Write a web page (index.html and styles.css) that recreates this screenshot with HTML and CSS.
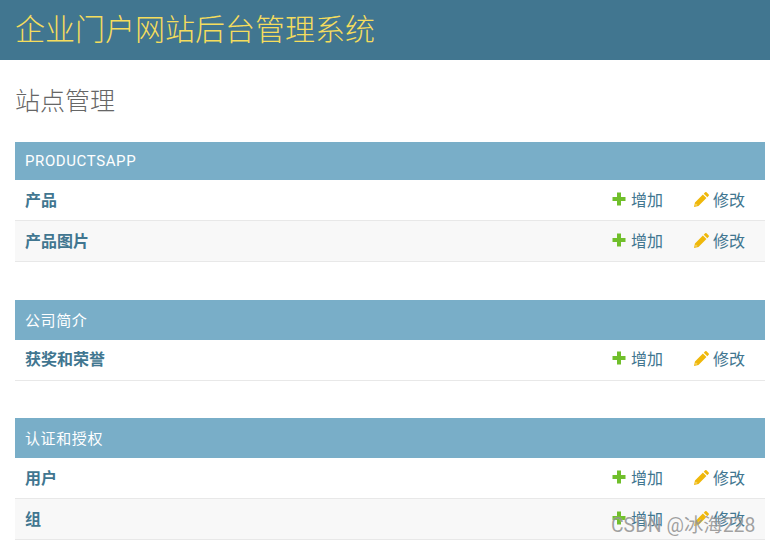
FILE: index.html
```html
<!DOCTYPE html>
<html lang="zh-CN">
<head>
<meta charset="utf-8">
<title>站点管理</title>
<link rel="stylesheet" href="styles.css">
</head>
<body>
<svg class="defs" width="0" height="0" aria-hidden="true">
  <symbol id="i-add" viewBox="0 0 14 14"><path d="M5 .5h4V5h4.5v4H9v4.5H5V9H.5V5H5z"/></symbol>
  <symbol id="i-edit" viewBox="0 0 14 14"><path fill-rule="evenodd" d="M10.4.3a1 1 0 0 1 1.3 0l2 2a1 1 0 0 1 0 1.3l-1.3 1.3-3.3-3.3zM8.3 2.4l3.3 3.3-7.4 7.4L0 14l.9-4.2zM1.9 10.6l-.6 2.1 2.1-.6-.6-.1-.8-.1z"/></symbol>
</svg>
<header class="site-header"><span class="brand">企业门户网站后台管理系统</span></header>
<main class="content">
  <h1 class="page-title">站点管理</h1>

  <section class="module">
    <h2 class="caption caption-latin">PRODUCTSAPP</h2>
    <div class="row">
      <a class="model">产品</a>
      <a class="action action-add"><svg class="icon add"><use href="#i-add"/></svg>增加</a>
      <a class="action"><svg class="icon edit"><use href="#i-edit"/></svg>修改</a>
    </div>
    <div class="row alt">
      <a class="model">产品图片</a>
      <a class="action action-add"><svg class="icon add"><use href="#i-add"/></svg>增加</a>
      <a class="action"><svg class="icon edit"><use href="#i-edit"/></svg>修改</a>
    </div>
  </section>

  <section class="module module-short">
    <h2 class="caption">公司简介</h2>
    <div class="row">
      <a class="model">获奖和荣誉</a>
      <a class="action action-add"><svg class="icon add"><use href="#i-add"/></svg>增加</a>
      <a class="action"><svg class="icon edit"><use href="#i-edit"/></svg>修改</a>
    </div>
  </section>

  <section class="module">
    <h2 class="caption">认证和授权</h2>
    <div class="row">
      <a class="model">用户</a>
      <a class="action action-add"><svg class="icon add"><use href="#i-add"/></svg>增加</a>
      <a class="action"><svg class="icon edit"><use href="#i-edit"/></svg>修改</a>
    </div>
    <div class="row alt">
      <a class="model">组</a>
      <a class="action action-add"><svg class="icon add"><use href="#i-add"/></svg>增加</a>
      <a class="action"><svg class="icon edit"><use href="#i-edit"/></svg>修改</a>
    </div>
  </section>
</main>
<div class="watermark">CSDN @冰海228</div>
</body>
</html>
```
FILE: styles.css
```css
* { box-sizing: border-box; }
html, body { margin: 0; padding: 0; }
html { height: 545px; overflow: hidden; }
body {
  background: #fff;
  font-family: Roboto, "Noto Sans CJK SC", sans-serif;
  color: #333;
  height: 545px;
  overflow: hidden;
  position: relative;
}
.defs { position: absolute; }
.site-header {
  height: 60px;
  background: #417690;
  padding: 0 15px;
  display: flex;
  align-items: center;
}
.brand {
  font-size: 30px;
  line-height: 60px;
  font-weight: 300;
  color: #f5dd5d;
}
.content { padding: 0 5px 0 15px; }
.page-title {
  margin: 0;
  height: 82px;
  padding-top: 24px;
  font-size: 25px;
  line-height: 36px;
  font-weight: 300;
  color: #666;
}
.module { margin-bottom: 38px; }
.module-short { margin-bottom: 37px; }
.module:last-child { margin-bottom: 0; }
.caption {
  margin: 0;
  height: 40px;
  padding: 0 0 1px 10px;
  display: flex;
  align-items: center;
  background: #79aec8;
  color: #fff;
  font-size: 15px;
  font-weight: 400;
  letter-spacing: 0.6px;
}
.caption-latin { height: 38px; padding-bottom: 0; }
.row {
  height: 41px;
  display: flex;
  align-items: center;
  padding: 0 20px 2px 10px;
  border-bottom: 1px solid #e8e8e8;
  background: #fff;
  color: #417690;
  font-size: 16px;
}
.module-short .row { padding-bottom: 4px; }
.row.alt { background: #f8f8f8; }
.model { font-weight: 700; margin-right: auto; }
.action {
  display: flex;
  align-items: center;
  margin-left: 31px;
}
.action-add { margin-left: 0; }
.icon { width: 14px; height: 14px; margin-right: 5px; }
.icon.add { fill: #70bf2b; }
.icon.edit { fill: #efb80b; width: 15px; height: 15px; margin-right: 4px; }
.watermark {
  position: absolute;
  left: 611px;
  top: 513px;
  font-size: 19.4px;
  line-height: 26px;
  white-space: nowrap;
  color: rgba(120, 120, 120, 0.7);
  text-shadow: 0 0 1px rgba(255, 255, 255, 0.6);
}
```
